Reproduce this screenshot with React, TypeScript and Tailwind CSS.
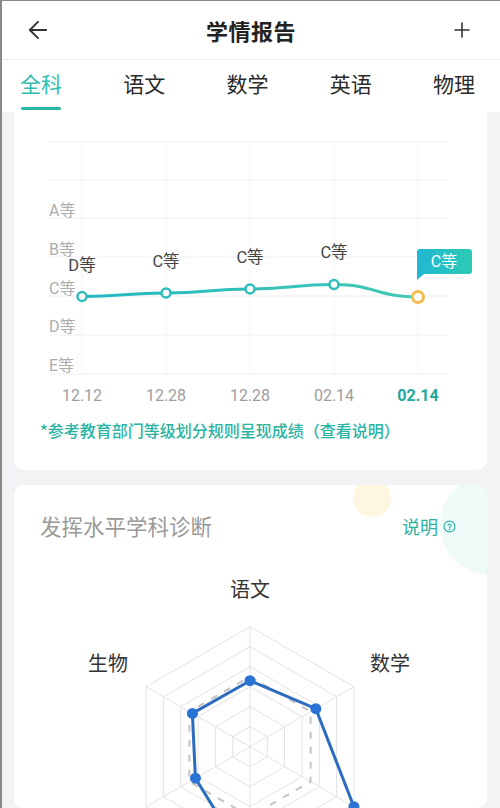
import { ArrowLeft, Plus } from 'lucide-react';

const tabs = ['全科', '语文', '数学', '英语', '物理'];

// chart coords are relative to the card's left/top edge
const gridY = [30, 68, 106, 145, 184, 223, 262];
const gridX = [68, 152, 236, 320, 404];
const levels = [
  { label: 'A等', y: 104 },
  { label: 'B等', y: 143 },
  { label: 'C等', y: 182 },
  { label: 'D等', y: 220 },
  { label: 'E等', y: 259 },
];
const points = [
  { x: 68, y: 184.5, grade: 'D等', ly: 159, date: '12.12' },
  { x: 152, y: 181, grade: 'C等', ly: 155, date: '12.28' },
  { x: 236, y: 177, grade: 'C等', ly: 151, date: '12.28' },
  { x: 320, y: 172.5, grade: 'C等', ly: 146, date: '02.14' },
  { x: 404, y: 185, grade: 'C等', ly: 0, date: '02.14' },
];

function hexPoints(cx: number, cy: number, radii: number[]) {
  return radii
    .map((r, i) => {
      const a = ((-90 + i * 60) * Math.PI) / 180;
      return `${(cx + r * Math.cos(a)).toFixed(1)},${(cy + r * Math.sin(a)).toFixed(1)}`;
    })
    .join(' ');
}

function LineChart() {
  const path = points
    .map((p, i) => {
      if (i === 0) return `M${p.x},${p.y}`;
      const prev = points[i - 1];
      const mx = (prev.x + p.x) / 2;
      return `C${mx},${prev.y} ${mx},${p.y} ${p.x},${p.y}`;
    })
    .join(' ');

  return (
    <svg width="473" height="298" className="block font-['Roboto','Noto_Sans_CJK_SC',sans-serif]">
      <defs>
        <linearGradient id="lineGrad" x1="0" x2="1" y1="0" y2="0">
          <stop offset="0%" stopColor="#22b8c2" />
          <stop offset="100%" stopColor="#43c9b3" />
        </linearGradient>
        <linearGradient id="tipGrad" x1="0" x2="1" y1="0" y2="0">
          <stop offset="0%" stopColor="#20b8d2" />
          <stop offset="100%" stopColor="#2ccab6" />
        </linearGradient>
      </defs>
      {gridY.map(y => (
        <line key={y} x1="35" x2="434" y1={y} y2={y} stroke="#efefef" strokeWidth="1" />
      ))}
      {gridX.map(x => (
        <line key={x} x1={x} x2={x} y1="30" y2="262" stroke="#f4f4f4" strokeWidth="1" />
      ))}
      {levels.map(l => (
        <text key={l.label} x="35" y={l.y} fontSize="16" fill="#adadad">
          {l.label}
        </text>
      ))}
      <path d={path} fill="none" stroke="url(#lineGrad)" strokeWidth="3" />
      {points.slice(0, 4).map((p, i) => (
        <g key={i}>
          <circle cx={p.x} cy={p.y} r="4.5" fill="#fff" stroke="#2dbdbd" strokeWidth="2.5" />
          <text x={p.x} y={p.ly} fontSize="16.5" fill="#444" textAnchor="middle">
            {p.grade}
          </text>
        </g>
      ))}
      <circle cx="404" cy="185" r="5.5" fill="#fff" stroke="#f2bd4a" strokeWidth="3" />
      <path d="M406,137 h49 a3,3 0 0 1 3,3 v19 a3,3 0 0 1 -3,3 h-45 l-7,6 v-28 a3,3 0 0 1 3,-3 z" fill="url(#tipGrad)" />
      <text x="430" y="155" fontSize="16" fill="#fff" textAnchor="middle">
        C等
      </text>
      {points.map((p, i) => (
        <text
          key={i}
          x={p.x}
          y="289"
          fontSize="16"
          textAnchor="middle"
          fill={i === 4 ? '#20a99b' : '#9d9d9d'}
          fontWeight={i === 4 ? 700 : 400}
        >
          {p.date}
        </text>
      ))}
    </svg>
  );
}

function RadarChart() {
  const cx = 236;
  const cy = 186.7;
  const rings = [20, 40, 60, 80, 100, 120];
  const values = [66, 76, 120, 120, 63, 66.5];

  return (
    <svg width="473" height="248" className="block font-['Noto_Sans_CJK_SC',sans-serif]">
      <text x="236" y="37" fontSize="20" fill="#333" textAnchor="middle">语文</text>
      <text x="94" y="111" fontSize="20" fill="#333" textAnchor="middle">生物</text>
      <text x="376" y="111" fontSize="20" fill="#333" textAnchor="middle">数学</text>
      {rings.map(r => (
        <polygon key={r} points={hexPoints(cx, cy, [r, r, r, r, r, r])} fill="none" stroke="#e3e3e3" strokeWidth="1" />
      ))}
      {[0, 1, 2, 3, 4, 5].map(i => {
        const a = ((-90 + i * 60) * Math.PI) / 180;
        return (
          <line key={i} x1={cx} y1={cy} x2={cx + 120 * Math.cos(a)} y2={cy + 120 * Math.sin(a)} stroke="#e3e3e3" strokeWidth="1" />
        );
      })}
      <polygon points={hexPoints(cx, cy, [70, 70, 70, 70, 70, 70])} fill="none" stroke="#c4c4c4" strokeWidth="2" strokeDasharray="7 8" />
      <polygon points={hexPoints(cx, cy, values)} fill="none" stroke="#2b6cc0" strokeWidth="3" strokeLinejoin="round" />
      {values.map((r, i) => {
        const a = ((-90 + i * 60) * Math.PI) / 180;
        return <circle key={i} cx={cx + r * Math.cos(a)} cy={cy + r * Math.sin(a)} r="5.5" fill="#2a72d4" />;
      })}
    </svg>
  );
}

export default function App() {
  return (
    <div className="w-[500px] h-[808px] overflow-hidden bg-[#f3f3f5] border-l-2 border-t border-[#8a8a8a] font-['Noto_Sans_CJK_SC','Noto_Sans',sans-serif]">
      <header className="h-[59px] bg-white border-b border-[#efefef] flex items-center justify-between pl-[22px] pr-[26px]">
        <ArrowLeft className="w-[28px] h-[28px] text-[#333]" strokeWidth={1.6} />
        <h1 className="text-[22px] font-bold text-[#222] tracking-[0.5px]">学情报告</h1>
        <Plus className="w-[24px] h-[24px] text-[#333]" strokeWidth={1.6} />
      </header>

      <nav className="h-[52px] bg-white flex items-start justify-between pl-[18px] pr-[25px]">
        {tabs.map((t, i) => (
          <div key={t} className="relative pt-[8px] flex flex-col items-center">
            <span className={`text-[21px] leading-[30px] ${i === 0 ? 'text-[#2ebcae]' : 'text-[#2a2a2a]'}`}>{t}</span>
            {i === 0 && <span className="mt-[9px] w-[40px] h-[3px] rounded-full bg-[#2bb5a6]" />}
          </div>
        ))}
      </nav>

      <section className="mx-[12px] mr-[13px] bg-white rounded-b-[10px]">
        <LineChart />
        <p className="pl-[26px] pt-[10px] pb-[29px] text-[16px] leading-[21px] font-medium text-[#2ab4a4]">
          *参考教育部门等级划分规则呈现成绩（查看说明）
        </p>
      </section>

      <section className="relative mt-[15px] mx-[12px] mr-[13px] bg-white rounded-[10px] overflow-hidden">
        <div className="absolute left-[339px] top-[-6px] w-[38px] h-[38px] rounded-full bg-[#fff6e1]" />
        <div className="absolute left-[426px] top-[-10px] w-[100px] h-[100px] rounded-full bg-[#f0fbf9]" />
        <div className="relative flex items-center justify-between pl-[26px] pr-[31px] pt-[27px]">
          <h2 className="text-[21.5px] leading-[28px] text-[#9a9a9a]">发挥水平学科诊断</h2>
          <div className="flex items-center gap-[5px] text-[#2bb2a4]">
            <span className="text-[18px] leading-[24px]">说明</span>
            <svg width="13" height="13" viewBox="0 0 24 24" fill="none" stroke="currentColor" strokeWidth="2.2" strokeLinecap="round">
              <circle cx="12" cy="12" r="10" />
              <path d="M9.3 9.5a2.8 2.8 0 0 1 5.4 1c0 1.8-2.7 2.3-2.7 3.8" />
              <circle cx="12" cy="17.6" r="0.6" fill="currentColor" />
            </svg>
          </div>
        </div>
        <div className="relative pt-[20px]">
          <RadarChart />
        </div>
      </section>
    </div>
  );
}
